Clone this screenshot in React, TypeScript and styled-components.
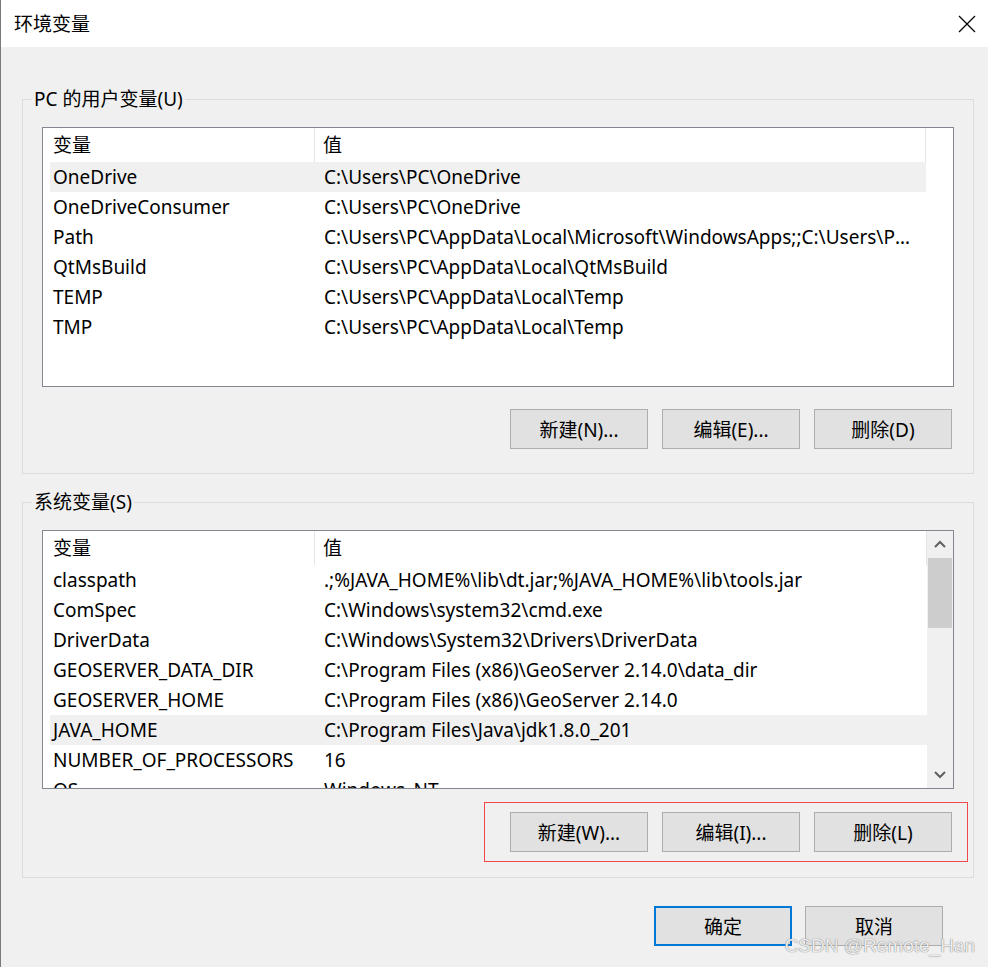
import styled, { createGlobalStyle } from "styled-components";

const Global = createGlobalStyle`
  html, body {
    margin: 0;
    padding: 0;
    background: #f0f0f0;
  }
  body {
    font-family: "Noto Sans", "Noto Sans CJK SC", sans-serif;
    font-size: 19px;
    color: #000;
  }
`;

type Row = { name: string; value: string; selected?: boolean };

const userVars: Row[] = [
  { name: "OneDrive", value: "C:\\Users\\PC\\OneDrive", selected: true },
  { name: "OneDriveConsumer", value: "C:\\Users\\PC\\OneDrive" },
  {
    name: "Path",
    value:
      "C:\\Users\\PC\\AppData\\Local\\Microsoft\\WindowsApps;;C:\\Users\\PC\\AppData\\Local\\Programs",
  },
  { name: "QtMsBuild", value: "C:\\Users\\PC\\AppData\\Local\\QtMsBuild" },
  { name: "TEMP", value: "C:\\Users\\PC\\AppData\\Local\\Temp" },
  { name: "TMP", value: "C:\\Users\\PC\\AppData\\Local\\Temp" },
];

const sysVars: Row[] = [
  { name: "classpath", value: ".;%JAVA_HOME%\\lib\\dt.jar;%JAVA_HOME%\\lib\\tools.jar" },
  { name: "ComSpec", value: "C:\\Windows\\system32\\cmd.exe" },
  { name: "DriverData", value: "C:\\Windows\\System32\\Drivers\\DriverData" },
  { name: "GEOSERVER_DATA_DIR", value: "C:\\Program Files (x86)\\GeoServer 2.14.0\\data_dir" },
  { name: "GEOSERVER_HOME", value: "C:\\Program Files (x86)\\GeoServer 2.14.0" },
  { name: "JAVA_HOME", value: "C:\\Program Files\\Java\\jdk1.8.0_201", selected: true },
  { name: "NUMBER_OF_PROCESSORS", value: "16" },
  { name: "OS", value: "Windows_NT" },
  { name: "Path", value: "C:\\Program Files\\Java\\jdk1.8.0_201\\bin" },
];

const W = {
  window: styled.div`
    position: relative;
    width: 988px;
    height: 967px;
    box-sizing: border-box;
    border-left: 1px solid #7a7a7a;
    background: #f0f0f0;
    overflow: hidden;
  `,
  titleBar: styled.div`
    height: 47px;
    background: #fff;
    display: flex;
    align-items: center;
    justify-content: space-between;
    padding: 0 12px 0 13px;
  `,
  title: styled.span`
    line-height: 24px;
  `,
  close: styled.svg`
    width: 18px;
    height: 18px;
  `,
  body: styled.div`
    padding: 0 14px 0 21px;
  `,
  group: styled.fieldset<{ $top: number; $bottom: number; $listTop: number }>`
    margin: ${(p) => p.$top}px 0 0 0;
    padding: ${(p) => p.$listTop}px 19px ${(p) => p.$bottom}px 19px;
    border: 1px solid #dcdcdc;
    min-width: 0;
  `,
  legend: styled.legend`
    margin-left: -10px;
    padding: 0 2px;
    line-height: 24px;
  `,
  list: styled.div<{ $height: number }>`
    position: relative;
    height: ${(p) => p.$height}px;
    box-sizing: border-box;
    border: 1px solid #828790;
    background: #fff;
    display: flex;
    overflow: hidden;
  `,
  table: styled.div<{ $scroll?: boolean }>`
    flex: 1;
    min-width: 0;
    display: flex;
    flex-direction: column;
    padding-right: ${(p) => (p.$scroll ? 0 : 27)}px;
  `,
  header: styled.div`
    display: grid;
    grid-template-columns: 272px 1fr;
    height: 34px;
    flex-shrink: 0;
    border-right: 1px solid #e5e5e5;
  `,
  headCell: styled.div<{ $first?: boolean }>`
    display: flex;
    align-items: center;
    padding-left: ${(p) => (p.$first ? 10 : 8)}px;
    border-right: ${(p) => (p.$first ? "1px solid #e5e5e5" : "none")};
    line-height: 24px;
  `,
  row: styled.div<{ $selected?: boolean }>`
    display: grid;
    grid-template-columns: 265px 1fr;
    height: 30px;
    flex-shrink: 0;
    align-items: center;
    margin-left: 7px;
    background: ${(p) => (p.$selected ? "#f0f0f0" : "transparent")};
  `,
  cell: styled.div<{ $first?: boolean }>`
    padding-left: ${(p) => (p.$first ? 3 : 9)}px;
    padding-right: ${(p) => (p.$first ? 0 : 8)}px;
    white-space: nowrap;
    overflow: hidden;
    text-overflow: ellipsis;
    line-height: 24px;
  `,
  scrollbar: styled.div`
    width: 26px;
    flex-shrink: 0;
    background: #f0f0f0;
    display: flex;
    flex-direction: column;
    align-items: center;
  `,
  arrow: styled.svg`
    width: 26px;
    height: 26px;
    flex-shrink: 0;
  `,
  thumb: styled.div`
    width: 24px;
    height: 70px;
    background: #cdcdcd;
    margin-top: 1px;
  `,
  track: styled.div`
    flex: 1;
  `,
  buttons: styled.div<{ $top: number; $marked?: boolean; $right: number; $gap: number }>`
    position: relative;
    display: flex;
    justify-content: flex-end;
    gap: ${(p) => p.$gap}px;
    margin-top: ${(p) => p.$top}px;
    margin-right: ${(p) => p.$right}px;
    ${(p) =>
      p.$marked &&
      `
      &::before {
        content: "";
        position: absolute;
        top: -10px;
        bottom: -10px;
        right: -16px;
        width: 482px;
        border: 1px solid #f0484a;
        pointer-events: none;
      }
    `}
  `,
  button: styled.button<{ $default?: boolean }>`
    width: 138px;
    height: 40px;
    box-sizing: border-box;
    background: #e1e1e1;
    border: ${(p) => (p.$default ? "2px solid #0078d7" : "1px solid #adadad")};
    font-family: "Noto Sans", "Noto Sans CJK SC", sans-serif;
    font-size: 19px;
    color: #000;
    padding: 0;
  `,
  watermark: styled.div`
    position: absolute;
    right: 13px;
    bottom: 9px;
    font-family: "Liberation Sans", "Noto Sans", sans-serif;
    font-size: 19px;
    line-height: 24px;
    color: rgba(255, 255, 255, 0.85);
    text-shadow: 0 0 1px #8a8a8a, 0 0 1px #8a8a8a;
  `,
};

function VarList(props: { rows: Row[]; height: number; scroll?: boolean }) {
  const { rows, height, scroll } = props;
  return (
    <W.list $height={height}>
      <W.table $scroll={scroll}>
        <W.header>
          <W.headCell $first>变量</W.headCell>
          <W.headCell>值</W.headCell>
        </W.header>
        {rows.map((r) => (
          <W.row key={r.name + r.value} $selected={r.selected}>
            <W.cell $first>{r.name}</W.cell>
            <W.cell>{r.value}</W.cell>
          </W.row>
        ))}
      </W.table>
      {scroll && (
        <W.scrollbar>
          <W.arrow viewBox="0 0 26 26">
            <path d="M8 16 L13 11 L18 16" fill="none" stroke="#606060" strokeWidth="2" />
          </W.arrow>
          <W.thumb />
          <W.track />
          <W.arrow viewBox="0 0 26 26">
            <path d="M8 10 L13 15 L18 10" fill="none" stroke="#606060" strokeWidth="2" />
          </W.arrow>
        </W.scrollbar>
      )}
    </W.list>
  );
}

export default function App() {
  return (
    <W.window>
      <Global />
      <W.titleBar>
        <W.title>环境变量</W.title>
        <W.close viewBox="0 0 18 18">
          <path d="M1 1 L17 17 M17 1 L1 17" stroke="#000" strokeWidth="1.2" />
        </W.close>
      </W.titleBar>
      <W.body>
        <W.group $top={40} $listTop={16} $bottom={24}>
          <W.legend>PC 的用户变量(U)</W.legend>
          <VarList rows={userVars} height={260} />
          <W.buttons $top={22} $right={2} $gap={14}>
            <W.button>新建(N)...</W.button>
            <W.button>编辑(E)...</W.button>
            <W.button>删除(D)</W.button>
          </W.buttons>
        </W.group>
        <W.group $top={16} $listTop={16} $bottom={25}>
          <W.legend>系统变量(S)</W.legend>
          <VarList rows={sysVars} height={259} scroll />
          <W.buttons $top={23} $right={2} $gap={14} $marked>
            <W.button>新建(W)...</W.button>
            <W.button>编辑(I)...</W.button>
            <W.button>删除(L)</W.button>
          </W.buttons>
        </W.group>
        <W.buttons $top={28} $right={31} $gap={13}>
          <W.button $default>确定</W.button>
          <W.button>取消</W.button>
        </W.buttons>
      </W.body>
      <W.watermark>CSDN @Remote_Han</W.watermark>
    </W.window>
  );
}
